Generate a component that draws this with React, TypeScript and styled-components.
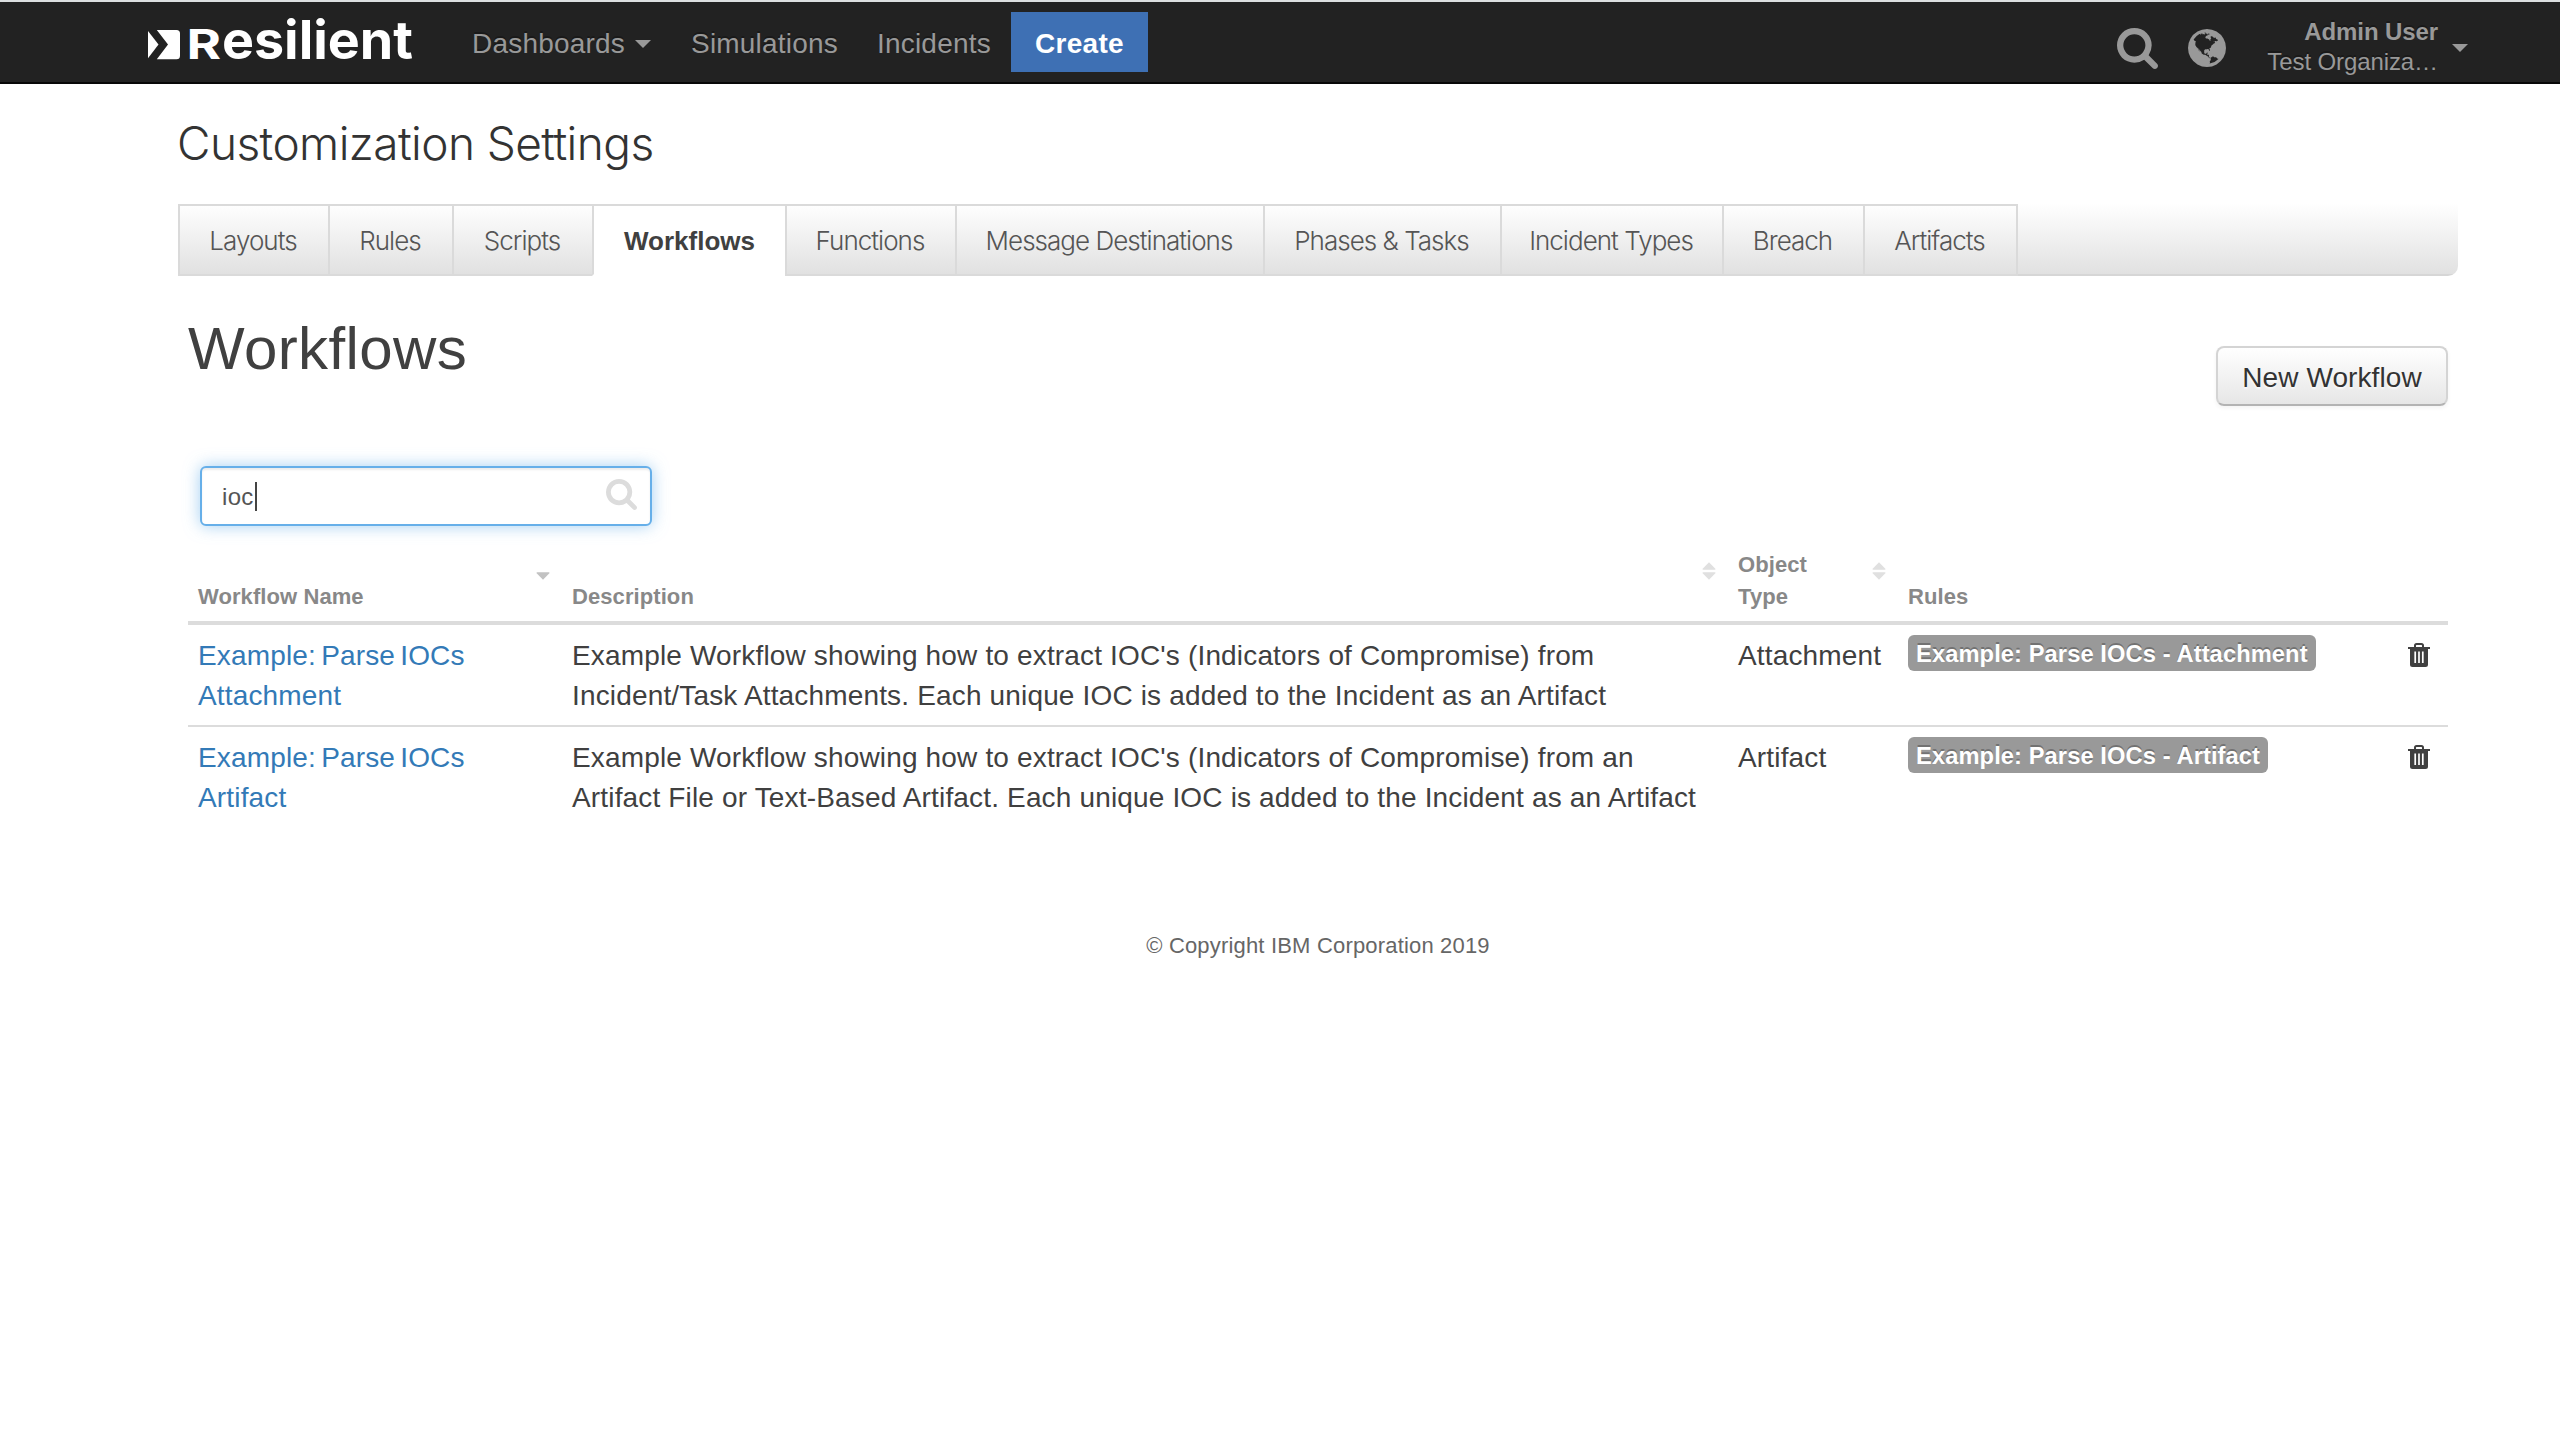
import React from "react";
import styled, { createGlobalStyle, css } from "styled-components";

const sans = `"Liberation Sans", Arial, sans-serif`;
const light = `Inter, "Liberation Sans", sans-serif`;

const GlobalStyle = createGlobalStyle`
  *, *::before, *::after { box-sizing: border-box; }
  body { margin: 0; background: #fff; color: #404040; font-family: ${sans}; font-size: 28px; }
  h1, h2 { margin: 0; font-weight: 400; }
`;

const TopBar = styled.header`
  display: flex;
  align-items: center;
  height: 84px;
  padding: 0 92px 0 148px;
  background: #222;
  border-top: 2px solid #dcdfe1;
  border-bottom: 2px solid #080808;
`;

const Logo = styled.svg`
  display: block;
  flex: none;
  width: 264px;
  height: 42px;
  margin: 0 60px 4px 0;
  overflow: visible;
  fill: #fff;
`;

const Wordmark = styled.text<{ $size: number; $weight: number }>`
  font-family: ${light};
  font-weight: ${(p) => p.$weight};
  font-size: ${(p) => p.$size}px;
`;

const NavLink = styled.a<{ $width: number }>`
  display: flex;
  align-items: center;
  flex: none;
  width: ${(p) => p.$width}px;
  height: 60px;
  padding-top: 4px;
  color: #999;
  letter-spacing: 0.2px;
  text-shadow: 0 -2px 0 rgba(0, 0, 0, 0.25);
`;

const CreateButton = styled.a`
  flex: none;
  width: 137px;
  height: 60px;
  padding-top: 2px;
  line-height: 60px;
  background: #3e70b4;
  color: #fff;
  font-weight: 700;
  letter-spacing: 0.3px;
  text-align: center;
`;

const Caret = styled.i<{ $left: number }>`
  flex: none;
  margin-left: ${(p) => p.$left}px;
  border: 8px solid transparent;
  border-top-color: #999;
  border-bottom: 0;
`;

const Account = styled.div`
  display: flex;
  align-items: center;
  margin-left: auto;
  padding-top: 12px;
`;

const BarIcon = styled.svg<{ $size: number; $gap: number }>`
  flex: none;
  width: ${(p) => p.$size}px;
  height: ${(p) => p.$size}px;
  margin-right: ${(p) => p.$gap}px;
  fill: #999;
`;

const UserBlock = styled.div`
  display: flex;
  flex-direction: column;
  align-items: flex-end;
  margin-top: -2px;
  color: #999;
  font-size: 24px;
  line-height: 30px;
  letter-spacing: -0.1px;
  text-shadow: 0 -2px 0 rgba(0, 0, 0, 0.25);
`;

const Main = styled.main`
  padding: 29px 102px 0 178px;
`;

const PageTitle = styled.h1`
  margin-left: -1px;
  font-family: ${light};
  font-weight: 300;
  font-size: 46px;
  line-height: 60px;
  letter-spacing: -0.57px;
  color: #333;
`;

const TabBar = styled.nav`
  display: flex;
  height: 72px;
  margin-top: 31px;
  border-bottom-right-radius: 10px;
  background: linear-gradient(#fff 0, #fdfdfd 4px, #e1e1e1 70px, #d6d6d6 70px);
`;

const Tab = styled.a<{ $width: number; $active?: boolean }>`
  display: flex;
  align-items: center;
  justify-content: center;
  flex: none;
  width: ${(p) => p.$width}px;
  height: 72px;
  padding: 0 2px 0 0;
  border: solid #dadada;
  border-width: 2px 0 2px 2px;
  font-family: ${light};
  font-weight: 300;
  font-size: 26px;
  letter-spacing: -0.97px;
  color: #555;
  white-space: nowrap;
  &:last-child { border-right-width: 2px; }
  ${(p) =>
    p.$active &&
    css`
      padding: 2px 0 0;
      background: #fff;
      border-bottom-color: #fff;
      border-left-color: #dadada;
      font-family: ${sans};
      font-weight: 700;
      letter-spacing: 0;
      color: #404040;
    `}
`;

const Panel = styled.section`
  padding: 33px 10px 0;
`;

const PanelHead = styled.div`
  display: flex;
  justify-content: space-between;
  align-items: flex-end;
  height: 97px;
`;

const PanelTitle = styled.h2`
  align-self: flex-start;
  font-size: 60px;
  line-height: 80px;
  letter-spacing: 0.4px;
  color: #404040;
`;

const Button = styled.button`
  width: 232px;
  height: 60px;
  padding: 4px 0 0;
  border: 2px solid #d4d4d4;
  border-bottom-color: #b3b3b3;
  border-radius: 8px;
  background: linear-gradient(#fff, #e6e6e6);
  box-shadow: 0 2px 4px rgba(0, 0, 0, 0.05);
  color: #333;
  font: 28px ${sans};
  letter-spacing: 0.1px;
  text-shadow: 0 2px 2px rgba(255, 255, 255, 0.75);
`;

const SearchBox = styled.div`
  display: flex;
  align-items: center;
  width: 452px;
  height: 60px;
  margin: 60px 0 0 12px;
  padding: 1px 13px 0 20px;
  border: 2px solid #66afe9;
  border-radius: 6px;
  box-shadow: inset 0 2px 2px rgba(0, 0, 0, 0.075), 0 0 16px rgba(102, 175, 233, 0.6);
  background: #fff;
  color: #555;
  font-size: 24px;
  letter-spacing: 0.3px;
`;

const TextCursor = styled.i`
  width: 2px;
  height: 29px;
  margin-left: 1px;
  background: #444;
`;

const SearchIcon = styled.svg`
  width: 31px;
  height: 31px;
  margin: 0 0 5px auto;
  fill: #dcdcdc;
`;

const grid = css`
  display: grid;
  grid-template-columns: 374px 1166px 170px 1fr 50px;
`;

const HeadRow = styled.div`
  ${grid}
  height: 87px;
  margin-top: 12px;
  padding-bottom: 8px;
  border-bottom: 4px solid #dcdcdc;
`;

const HeadCell = styled.div`
  display: flex;
  justify-content: space-between;
  align-items: flex-end;
  padding: 0 12px 0 10px;
  color: #888;
  font-weight: 700;
  font-size: 22px;
  line-height: 32px;
  letter-spacing: 0.08px;
`;

const SortSvg = styled.svg<{ $active?: boolean }>`
  width: 14px;
  height: 18px;
  margin-bottom: 33px;
  fill: ${(p) => (p.$active ? "#c2c2c2" : "#e0e0e0")};
`;

const Row = styled.div`
  ${grid}
  padding: 11px 0 9px;
  line-height: 40px;
  & + & { border-top: 2px solid #dcdcdc; }
`;

const Cell = styled.div<{ $link?: boolean }>`
  padding-left: 10px;
  white-space: pre;
  letter-spacing: 0.16px;
  word-spacing: ${(p) => (p.$link ? -2.8 : 0)}px;
  color: ${(p) => (p.$link ? "#337ab7" : "#404040")};
`;

const Badge = styled.span`
  display: block;
  width: max-content;
  height: 36px;
  margin-top: -1px;
  padding: 2px 8px 0;
  border-radius: 6px;
  background: #999;
  color: #fff;
  font-weight: 700;
  font-size: 23.7px;
  line-height: 35px;
  letter-spacing: 0.09px;
  text-shadow: 0 -2px 0 rgba(0, 0, 0, 0.25);
`;

const TrashSvg = styled.svg`
  display: block;
  width: 22px;
  height: 24px;
  margin-top: 7px;
`;

const Footer = styled.footer`
  margin-top: 99px;
  font-size: 22px;
  line-height: 40px;
  letter-spacing: 0.18px;
  text-align: center;
  color: #666;
`;

const SEARCH_PATH =
  "M1152 832q0-185-131.5-316.5t-316.5-131.5-316.5 131.5-131.5 316.5 131.5 316.5 316.5 131.5 316.5-131.5 131.5-316.5zm512 832q0 52-38 90t-90 38q-54 0-90-38l-343-342q-179 124-399 124-143 0-273.5-55.5t-225-150-150-225-55.5-273.5 55.5-273.5 150-225 225-150 273.5-55.5 273.5 55.5 225 150 150 225 55.5 273.5q0 220-124 399l343 343q37 37 37 90z";

const GLOBE_PATH =
  "M768 128q209 0 385.5 103t279.5 279.5 103 385.5-103 385.5-279.5 279.5-385.5 103-385.5-103-279.5-279.5-103-385.5 103-385.5 279.5-279.5 385.5-103zm274 521q-2 1-9.5 9.5t-13.5 9.5q2 0 4.5-5t5-11 3.5-7q6-7 22-15 14-6 52-12 34-8 51 11-2-2 9.5-13t14.5-12q3-2 15-4.5t15-7.5l2-22q-12 1-17.5-7t-6.5-21q0 2-6 8 0-7-4.5-8t-11.5 1-9 1q-10-3-15-7.5t-8-16.5-4-15q-2-5-9.5-11t-9.5-10q-1-2-2.5-5.5t-3-6.5-4-5.5-5.5-2.5-7 5-7.5 10-4.5 5q-3-2-6-1.5t-4.5 1-4.5 3-5 3.5q-3 2-8.5 3t-8.5 2q15-5-1-11-10-4-16-3 9-4 7.5-12t-8.5-14h5q-1-4-8.5-8.5t-17.5-8.5-13-6q-8-5-34-9.5t-33-.5q-5 6-4.5 10.5t4 14 3.5 12.5q1 6-5.5 13t-6.5 12q0 7 14 15.5t10 21.5q-3 8-16 16t-16 12q-5 8-1.5 18.5t10.5 16.5q2 2 1.5 4t-3.5 4.5-5.5 4-6.5 3.5l-3 2q-11 5-20.5-6t-13.5-26q-7-25-16-30-23-8-29 1-5-13-41-26-25-9-58-4 6-1 0-15-7-15-19-12 3-6 4-17.5t1-13.5q3-13 12-23 1-1 7-8.5t9.5-13.5.5-6q35 4 50-11 5-5 11.5-17t10.5-17q9-6 14-5.5t14.5 5.5 14.5 5q14 1 15.5-11t-7.5-20q12 1 3-17-4-7-8-9-12-4-27 5-8 4 2 8-1-1-9.5 10.5t-16.5 17.5-16-5q-1-1-5.5-13.5t-9.5-13.5q-8 0-16 15 3-8-11-15t-24-8q19-12-8-27-7-4-20.5-5t-19.5 4q-5 7-5.5 11.5t5 8 10.5 5.5 11.5 4 8.5 3q14 10 8 14-2 1-8.5 3.5t-11.5 4.5-6 4q-3 4 0 14t-2 14q-5-5-9-17.5t-7-16.5q7 9-25 6l-10-1q-4 0-16 2t-20.5 1-13.5-8q-4-8 0-20 1-4 4-2-4-3-11-9.5t-10-8.5q-46 15-94 41 6 1 12-1 5-2 13-6.5t10-5.5q34-14 42-7l5-5q14 16 20 25-7-4-30-1-20 6-22 12 7 12 5 18-4-3-11.5-10t-14.5-11-15-5q-16 0-22 1-146 80-235 222 7 7 12 8 4 1 5 9t2.5 11 11.5-3q9 8 3 19 1-1 44 27 19 17 21 21 3 11-10 18-1-2-9-9t-9-4q-3 5 .5 18.5t10.5 12.5q-7 0-9.5 16t-2.5 35.5-1 23.5l2 1q-3 12 5.5 34.5t21.5 19.5q-13 3 20 43 6 8 8 9 3 2 12 7.5t15 10 10 10.5q4 5 10 22.5t14 23.5q-2 6 9.5 20t10.5 23q-1 0-2.5 1t-2.5 1q3 7 15.5 14t15.5 13q1 3 2 10t3 11 8 2q2-20-24-62-15-25-17-29-3-5-5.5-15.5t-4.5-14.5q2 0 6 1.5t8.5 3.5 7.5 4 2 3q-3 7 2 17.5t12 18.5 17 19 12 13q6 6 14 19.5t0 13.5q9 0 20 10t17 20q5 8 8 26t5 24q2 7 8.5 13.5t12.5 9.5l16 8 13 7q5 2 18.5 10.5t21.5 11.5q10 4 16 4t14.5-2.5 13.5-3.5q15-2 29 15t21 21q36 19 55 11-2 1 .5 7.5t8 15.5 9 14.5 5.5 8.5q5 6 18 15t18 15q6-4 7-9-3 8 7 20t18 10q14-3 14-32-31 15-49-18 0-1-2.5-5.5t-4-8.5-2.5-8.5 0-7.5 5-3q9 0 10-3.5t-2-12.5-4-13q-1-8-11-20t-12-15q-5 9-16 8t-16-9q0 1-1.5 5.5t-1.5 6.5q-13 0-15-1 1-3 2.5-17.5t3.5-22.5q1-4 5.5-12t7.5-14.5 4-12.5-4.5-9.5-17.5-2.5q-19 1-26 20-1 3-3 10.5t-5 11.5-9 7q-7 3-24 2t-24-5q-13-8-22.5-29t-9.5-37q0-10 2.5-26.5t3-25-5.5-24.5q3-2 9-9.5t10-10.5q2-1 4.5-1.5t4.5 0 4-1.5 3-6q-1-1-4-3-3-3-4-3 7 3 28.5-1.5t27.5 1.5q15 11 22-2 0-1-2.5-9.5t-.5-13.5q5 27 29 9 3 3 15.5 5t17.5 5q3 2 7 5.5t5.5 4.5 5-.5 8.5-6.5q10 14 12 24 11 40 19 44 7 3 11 2t4.5-9.5 0-14-1.5-12.5l-1-8v-18l-1-8q-15-3-18.5-12t1.5-18.5 15-18.5q1-1 8-3.5t15.5-6.5 12.5-8q21-19 15-35 7 0 11-9-1 0-5-3t-7.5-5-4.5-2q9-5 2-16 5-3 7.5-11t7.5-10q9 12 21 2 8-8 1-16 5-7 20.5-10.5t18.5-9.5q7 2 8-2t1-12 3-12q4-5 15-9t13-5l17-11q3-4 0-4 18 2 31-11 10-11-6-20 3-6-3-9.5t-15-5.5q3-1 11.5-.5t10.5-1.5q15-10-7-16-17-5-43 12zm-163 877q206-36 351-189-3-3-12.5-4.5t-12.5-3.5q-18-7-24-8 1-7-2.5-13t-8-9-12.5-8-11-7q-2-2-7-6t-7-5.5-7.5-4.5-8.5-2-10 1l-3 1q-3 1-5.5 2.5t-5.5 3-4 3 0 2.5q-21-17-36-22-5-1-11-5.5t-10.5-7-10-1.5-11.5 7q-5 5-6 15t-2 13q-7-5 0-17.5t2-18.5q-3-6-10.5-4.5t-12 4.5-11.5 8.5-9 6.5-8.5 5.5-8.5 7.5q-3 4-6 12t-5 11q-2-4-11.5-6.5t-9.5-5.5q2 10 4 35t5 38q7 31-12 48-27 25-29 40-4 22 12 26 0 7-8 20.5t-7 21.5q0 6 2 16z";

const tabs = [
  { label: "Layouts", width: 150 },
  { label: "Rules", width: 124 },
  { label: "Scripts", width: 140 },
  { label: "Workflows", width: 193, active: true },
  { label: "Functions", width: 170 },
  { label: "Message Destinations", width: 308 },
  { label: "Phases & Tasks", width: 237 },
  { label: "Incident Types", width: 222 },
  { label: "Breach", width: 141 },
  { label: "Artifacts", width: 155 },
];

const workflows = [
  {
    name: "Example: Parse IOCs\nAttachment",
    description:
      "Example Workflow showing how to extract IOC's (Indicators of Compromise) from\nIncident/Task Attachments. Each unique IOC is added to the Incident as an Artifact",
    type: "Attachment",
    rule: "Example: Parse IOCs - Attachment",
  },
  {
    name: "Example: Parse IOCs\nArtifact",
    description:
      "Example Workflow showing how to extract IOC's (Indicators of Compromise) from an\nArtifact File or Text-Based Artifact. Each unique IOC is added to the Incident as an Artifact",
    type: "Artifact",
    rule: "Example: Parse IOCs - Artifact",
  },
];

const SortIcon = ({ active }: { active?: boolean }) => (
  <SortSvg viewBox="0 0 14 18" $active={active}>
    {!active && <path d="M7 0.3L13.6 7Q13.4 7.8 12.8 7.8H1.2Q0.6 7.8 0.4 7Z" />}
    <path d="M7 17.7L0.4 11Q0.6 10.2 1.2 10.2H12.8Q13.4 10.2 13.6 11Z" />
  </SortSvg>
);

const TrashIcon = () => (
  <TrashSvg viewBox="0 0 22 24">
    <path
      d="M7 4V2.6Q7 1 8.6 1H13.4Q15 1 15 2.6V4"
      fill="none"
      stroke="#404040"
      strokeWidth="2"
    />
    <path d="M0 4H22V6H0Z M2 6H20V21.5Q20 24 17.5 24H4.5Q2 24 2 21.5Z" fill="#404040" />
    <path d="M7.2 8.5V20M11 8.5V20M14.8 8.5V20" stroke="#fff" strokeWidth="1.7" />
  </TrashSvg>
);

export default function App() {
  return (
    <>
      <GlobalStyle />
      <TopBar>
        <Logo viewBox="0 0 264 42">
          <path d="M0 12L10.5 25.5L0 39.3Z" />
          <path d="M8.8 11H28.5Q32 11 32 14.5V36.8Q32 40.3 28.5 40.3H8.8L20 25.5Z" />
          <Wordmark $size={40.5} $weight={700} transform="translate(38.6 40.3) scale(1.3 1)">
            R
          </Wordmark>
          <Wordmark
            $size={53}
            $weight={700}
            x="74"
            y="40.3"
            textLength="191"
            lengthAdjust="spacingAndGlyphs"
          >
            esilient
          </Wordmark>
        </Logo>
        <NavLink $width={219}>
          Dashboards
          <Caret $left={10} />
        </NavLink>
        <NavLink $width={186}>Simulations</NavLink>
        <NavLink $width={134}>Incidents</NavLink>
        <CreateButton>Create</CreateButton>
        <Account>
          <BarIcon viewBox="0 128 1664 1664" $size={41} $gap={30}>
            <path d={SEARCH_PATH} />
          </BarIcon>
          <BarIcon viewBox="0 128 1536 1536" $size={38} $gap={41}>
            <path d={GLOBE_PATH} />
          </BarIcon>
          <UserBlock>
            <strong>Admin User</strong>
            <span>Test Organiza…</span>
          </UserBlock>
          <Caret $left={14} />
        </Account>
      </TopBar>
      <Main>
        <PageTitle>Customization Settings</PageTitle>
        <TabBar>
          {tabs.map((t) => (
            <Tab key={t.label} $width={t.width} $active={t.active}>
              {t.label}
            </Tab>
          ))}
        </TabBar>
        <Panel>
          <PanelHead>
            <PanelTitle>Workflows</PanelTitle>
            <Button>New Workflow</Button>
          </PanelHead>
          <SearchBox>
            ioc
            <TextCursor />
            <SearchIcon viewBox="0 128 1664 1664">
              <path d={SEARCH_PATH} />
            </SearchIcon>
          </SearchBox>
          <HeadRow>
            <HeadCell>
              Workflow Name
              <SortIcon active />
            </HeadCell>
            <HeadCell>
              Description
              <SortIcon />
            </HeadCell>
            <HeadCell>
              <span>
                Object
                <br />
                Type
              </span>
              <SortIcon />
            </HeadCell>
            <HeadCell>Rules</HeadCell>
            <HeadCell />
          </HeadRow>
          {workflows.map((w) => (
            <Row key={w.type}>
              <Cell $link>{w.name}</Cell>
              <Cell>{w.description}</Cell>
              <Cell>{w.type}</Cell>
              <Cell>
                <Badge>{w.rule}</Badge>
              </Cell>
              <Cell>
                <TrashIcon />
              </Cell>
            </Row>
          ))}
        </Panel>
        <Footer>© Copyright IBM Corporation 2019</Footer>
      </Main>
    </>
  );
}
